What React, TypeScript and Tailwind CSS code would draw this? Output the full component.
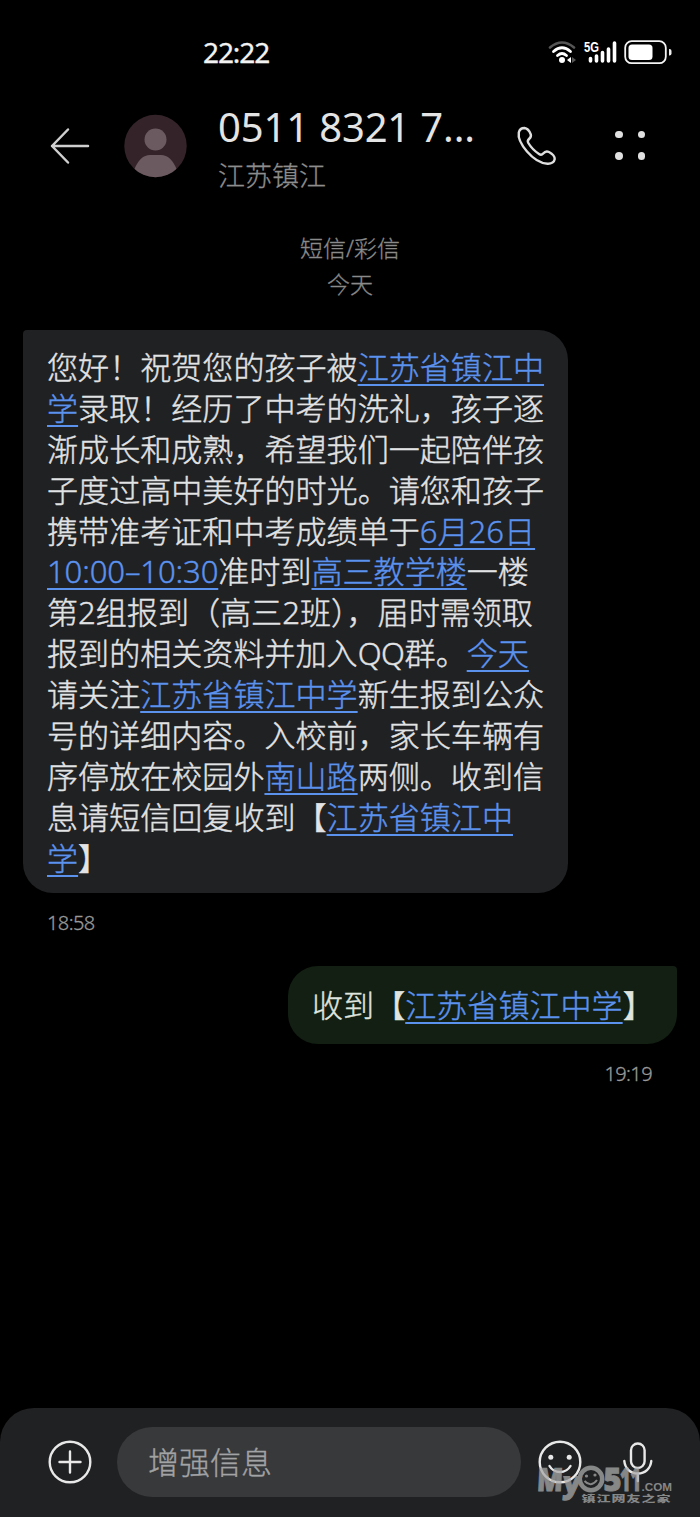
import type { ReactNode } from "react";

const FONT = "font-['Noto_Sans','Noto_Sans_CJK_SC',sans-serif]";

type Segment = string | { link: string; className?: string } | { text: string; className: string };

const RECEIVED: Segment[][] = [
  ["您好！祝贺您的孩子被", { link: "江苏省镇江中" }],
  [{ link: "学" }, "录取！经历了中考的洗礼，孩子逐"],
  ["渐成长和成熟，希望我们一起陪伴孩"],
  ["子度过高中美好的时光。请您和孩子"],
  ["携带准考证和中考成绩单于", { link: "6月26日" }],
  [{ link: "10:00–10:30", className: "tracking-[-0.12px]" }, "准时到", { link: "高三教学楼" }, "一楼"],
  ["第2组报到（高三2班），届时需领取"],
  ["报到的相关资料并加入", { text: "QQ", className: "tracking-[-0.4px]" }, "群。", { link: "今天" }],
  ["请关注", { link: "江苏省镇江中学" }, "新生报到公众"],
  ["号的详细内容。入校前，家长车辆有"],
  ["序停放在校园外", { link: "南山路" }, "两侧。收到信"],
  ["息请短信回复收到【", { link: "江苏省镇江中" }],
  [{ link: "学" }, "】"],
];

const SENT: Segment[] = ["收到【", { link: "江苏省镇江中学" }, "】"];

function Line({ segments }: { segments: Segment[] }) {
  return (
    <div className="h-[40.9px] whitespace-nowrap text-[31.07px] leading-[40.9px] font-light [-webkit-text-stroke:0.4px]">
      {segments.map((s, i) => {
        if (typeof s === "string") return <span key={i}>{s}</span>;
        if ("link" in s) {
          return (
            <a
              key={i}
              className={`text-[#5b92ee] underline decoration-[#5b92ee] decoration-[1.5px] underline-offset-[5px] [text-decoration-skip-ink:none] ${s.className ?? ""}`}
            >
              {s.link}
            </a>
          );
        }
        return (
          <span key={i} className={s.className}>
            {s.text}
          </span>
        );
      })}
    </div>
  );
}

function StatusBar() {
  return (
    <div className="flex h-[104px] items-center justify-between pr-[28px] pl-[203px]">
      <span className="text-[28px] leading-none font-normal tracking-[-1.1px] text-[#f2f2f2] [-webkit-text-stroke:0.3px]">22:22</span>
      <svg width="124" height="28" viewBox="548 38 124 28" fill="none">
        <g strokeLinecap="round">
          <path d="M550 47.500Q562 37.500 574 47.500" stroke="#555" strokeWidth="2.600" />
          <path d="M553.500 51.500Q562 44 570.500 51.500" stroke="#fff" strokeWidth="2.800" />
          <path d="M557.500 55.500Q562 51.500 566.500 55.500" stroke="#fff" strokeWidth="2.800" />
        </g>
        <circle cx="562" cy="60" r="3" fill="#fff" />
        <path d="M571 57v6l-4-3z" fill="#fff" />
        <path d="M572 57v6l4-3z" fill="#555" />
        <text x="584" y="52" fill="#fff" fontSize="14.500" fontWeight="700" textLength="15" lengthAdjust="spacingAndGlyphs" fontFamily="Liberation Sans, sans-serif">
          5G
        </text>
        <g stroke="#fff" strokeWidth="3.600" strokeLinecap="round">
          <path d="M590.500 58.500V61M596.500 56V61M602.500 52.500V61M608.500 49V61M614.500 43V61" />
        </g>
        <rect x="625.200" y="41.200" width="40.600" height="22" rx="6.500" stroke="#f4f4f4" strokeWidth="1.800" />
        <rect x="628.500" y="44.500" width="24" height="15.500" rx="3.500" fill="#fff" />
        <path d="M669 49h.5a2 2 0 0 1 2 2v2.500a2 2 0 0 1-2 2h-.5z" fill="#eee" />
      </svg>
    </div>
  );
}

function Header() {
  return (
    <header className="flex h-[96px] items-start pt-[2px] pl-[48px]">
      <svg className="mt-[20px] shrink-0" width="44" height="40" viewBox="48 126 44 40" fill="none" stroke="#cfcfcf" strokeWidth="2.500" strokeLinecap="round" strokeLinejoin="round">
        <path d="M88 146H52M68 129.500 52 146l16 16.500" />
      </svg>
      <svg className="mt-[8px] ml-[32px] shrink-0" width="64" height="64" viewBox="0 0 64 64">
        <clipPath id="avatar">
          <circle cx="31.500" cy="32" r="31.200" />
        </clipPath>
        <g clipPath="url(#avatar)">
          <rect width="64" height="64" fill="#35232a" />
          <circle cx="31.500" cy="25.500" r="11" fill="#6b5b61" />
          <path d="M10 64V56Q16 41 26 41H37Q47 41 53 56V64z" fill="#6b5b61" />
        </g>
      </svg>
      <div className="ml-[30px] w-[296px] shrink-0">
        <h1 className="-mt-[1px] h-[54px] text-[40px] leading-[44px] font-normal tracking-[-0.15px] whitespace-nowrap text-[#e4e4e4]">0511 8321 7...</h1>
        <p className="-mt-[1px] text-[27px] leading-[36px] font-light text-[#8d8d8d] [-webkit-text-stroke:0.3px]">江苏镇江</p>
      </div>
      <Phone />
      <div className="mt-[24.500px] ml-[57px] grid grid-cols-2 gap-x-[15px] gap-y-[14px]">
        {[0, 1, 2, 3].map((n) => (
          <span key={n} className="size-[7.500px] rounded-full bg-[#e0e0e0]" />
        ))}
      </div>
    </header>
  );
}

function Phone() {
  return (
    <svg className="mt-[18px] shrink-0" width="44" height="44" viewBox="514 124 44 44" fill="none" stroke="#dedede" strokeWidth="2.400" strokeLinejoin="round">
      <path d="M518.800 132.500C519.500 129.500 521.500 128 524.500 128C527 128.300 529.500 131 530.800 134.500C531.400 136.500 530.500 137.700 529 139C527.600 140.300 527.400 141.500 528.300 143C531 147.500 534.500 151 539 154C540.800 155.300 542 155 543.200 153.500C545 151.200 546.600 150.800 549 152C552 153.600 554.700 156.500 554.700 159C554.300 162 551.500 164 547.500 163.800C541 163.300 533 158.500 527 151.500C521.500 145 517.800 138 518.800 132.500Z" />
    </svg>
  );
}

function Watermark() {
  return (
    <svg className="absolute top-[1447px] left-[530px]" width="150" height="70" viewBox="530 1447 150 70" fill="#a9a9a9" opacity="0.75">
      <g fontFamily="Open Sans, sans-serif" fontWeight="800" stroke="#a9a9a9" strokeWidth="1">
        <text transform="translate(536.500 1491) skewX(-3)" fontSize="32" textLength="26" lengthAdjust="spacingAndGlyphs">M</text>
        <text transform="translate(562 1493) skewX(-6)" fontSize="30" textLength="18" lengthAdjust="spacingAndGlyphs">y</text>
        <text x="603.500" y="1491" fontSize="32" textLength="18" lengthAdjust="spacingAndGlyphs">5</text>
        <text x="620" y="1491" fontSize="32" textLength="21" lengthAdjust="spacingAndGlyphs">11</text>
      </g>
      <circle cx="591" cy="1479" r="11.200" fill="none" stroke="#a9a9a9" strokeWidth="4.500" />
      <circle cx="586.500" cy="1476" r="1.600" />
      <circle cx="595" cy="1475" r="1.600" />
      <path d="M584.500 1481Q591 1488 597 1480" fill="none" stroke="#a9a9a9" strokeWidth="2" />
      <text x="641.500" y="1491" fontSize="10.500" fontWeight="700" fontFamily="Liberation Sans, sans-serif" textLength="30.500" lengthAdjust="spacingAndGlyphs">.COM</text>
      <text transform="translate(581.500 1502) scale(1 .62)" fontSize="14" fontWeight="900" fontFamily="Noto Sans CJK SC, sans-serif" textLength="89">镇江网友之家</text>
    </svg>
  );
}

function Composer() {
  return (
    <footer className="flex h-[109px] items-start rounded-t-[34px] bg-[#202123] pt-[19px] pl-[48px]">
      <svg className="mt-[13px]" width="44" height="44" viewBox="0 0 44 44" fill="none" stroke="#e8e8e8" strokeWidth="2.400" strokeLinecap="round">
        <circle cx="22" cy="22" r="20.300" />
        <path d="M22 11.500v21M11.500 22h21" />
      </svg>
      <div className="ml-[25px] flex h-[70px] w-[404px] items-center rounded-full bg-[#38393b] pl-[31px] text-[31px] font-light text-[#a2a3a4] [-webkit-text-stroke:0.35px]">
        <span className="leading-[40px]">增强信息</span>
      </div>
      <svg className="mt-[13px] ml-[17px]" width="44" height="44" viewBox="0 0 44 44" fill="none" stroke="#e8e8e8" strokeWidth="2.400" strokeLinecap="round">
        <circle cx="22" cy="22" r="20.300" />
        <path d="M11.500 26Q15 32 22 32T32.500 26" />
        <circle cx="12.800" cy="17.200" r="2.500" fill="#e8e8e8" stroke="none" />
        <circle cx="31.200" cy="17.200" r="2.500" fill="#e8e8e8" stroke="none" />
      </svg>
      <svg className="mt-[13px] ml-[38px]" width="36" height="44" viewBox="620 1440 36 44" fill="none" stroke="#e8e8e8" strokeWidth="2.400" strokeLinecap="round">
        <rect x="631" y="1443.500" width="13.600" height="24.500" rx="6.800" />
        <path d="M624.300 1461C625 1468.500 630.500 1473.500 637.800 1473.500S650.600 1468.500 651.300 1461M637.800 1473.500V1481" />
      </svg>
    </footer>
  );
}

function Stamp({ children, className }: { children: ReactNode; className: string }) {
  return (
    <time className={`block text-[20px] leading-[28px] font-light tracking-[-0.6px] text-[#999] [-webkit-text-stroke:0.3px] ${className}`}>
      {children}
    </time>
  );
}

export default function App() {
  return (
    <div className={`relative flex h-[1517px] w-[700px] flex-col overflow-hidden bg-black ${FONT}`}>
      <StatusBar />
      <Header />
      <main className="flex flex-1 flex-col">
        <div className="mt-[30px] text-center text-[23px] leading-[36px] font-light text-[#8a8a8a] [-webkit-text-stroke:0.3px]">
          <p>短信/彩信</p>
          <p>今天</p>
        </div>
        <div className="mt-[28px] ml-[23px] h-[563px] w-[545px] rounded-[30px] rounded-tl-[4px] bg-[#202123] pt-[17px] pl-[24px] text-[#e2e3e4]">
          {RECEIVED.map((segments, i) => (
            <Line key={i} segments={segments} />
          ))}
        </div>
        <Stamp className="mt-[16px] ml-[47px]">18:58</Stamp>
        <div className="mt-[29px] ml-[288px] h-[78px] w-[389px] rounded-[30px] rounded-tr-[4px] bg-[#121f12] pt-[19px] pl-[24px] text-[#dfe4df]">
          <Line segments={SENT} />
        </div>
        <Stamp className="mt-[16px] mr-[48px] text-right">19:19</Stamp>
      </main>
      <Composer />
      <Watermark />
    </div>
  );
}
